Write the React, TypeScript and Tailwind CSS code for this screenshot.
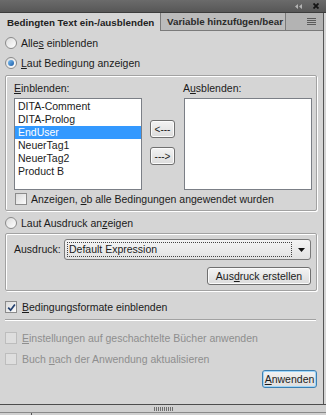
import React from "react";

function U({ children }: { children: React.ReactNode }) {
  return <span className="underline underline-offset-[1px] decoration-1">{children}</span>;
}

function Radio({ checked }: { checked?: boolean }) {
  return (
    <span className="flex h-[12px] w-[12px] shrink-0 items-center justify-center rounded-full border border-[#8b8b8b] bg-gradient-to-br from-[#dcdcdc] to-[#ffffff]">
      {checked && <span className="h-[6px] w-[6px] rounded-full bg-gradient-to-br from-[#7cc0f4] to-[#1a5ca6]" />}
    </span>
  );
}

function Check({ checked, disabled }: { checked?: boolean; disabled?: boolean }) {
  return (
    <span
      className={
        disabled
          ? "flex h-[12px] w-[12px] shrink-0 items-center justify-center border border-[#bdbdbd] bg-[#dedede]"
          : "flex h-[12px] w-[12px] shrink-0 items-center justify-center border border-[#8b8b8b] bg-gradient-to-br from-[#dadada] to-[#fbfbfb]"
      }
    >
      {checked && (
        <svg width="9" height="9" viewBox="0 0 9 9">
          <path d="M1.2 4.6 L3.6 7.2 L7.9 1.4" stroke="#23406f" strokeWidth="1.7" fill="none" />
        </svg>
      )}
    </span>
  );
}

const btn =
  "flex h-[18px] items-center justify-center rounded-[3px] border border-[#707070] bg-gradient-to-b from-[#f3f3f3] to-[#dcdcdc] shadow-[inset_0_0_0_1px_#fbfbfb]";

const group = "rounded-[2px] border border-[#a2a2a2] shadow-[inset_1px_1px_0_#ffffff,1px_1px_0_#ffffff]";

const items = ["DITA-Comment", "DITA-Prolog", "EndUser", "NeuerTag1", "NeuerTag2", "Product B"];

export default function App() {
  return (
    <div className="flex h-[415px] w-[326px] flex-col overflow-hidden whitespace-nowrap bg-[#d5d5d5] font-['Liberation_Sans',Arial,sans-serif] text-[10.5px] leading-[13px] text-[#1b1b1b]">
      {/* title bar */}
      <div className="flex h-[13px] shrink-0 items-center justify-end gap-[11px] border-b border-[#3c3c3c] bg-gradient-to-b from-[#6b6b6b] to-[#575757] pr-[7px]">
        <svg width="7" height="5" viewBox="0 0 7 5">
          <path d="M3 0 L0 2.5 L3 5Z M7 0 L4 2.5 L7 5Z" fill="#b4b4b4" />
        </svg>
        <svg width="6" height="6" viewBox="0 0 6 6">
          <path d="M0.5 0.5 L5.5 5.5 M5.5 0.5 L0.5 5.5" stroke="#141414" strokeWidth="1.8" />
        </svg>
      </div>

      <div className="flex min-h-0 flex-1">
        {/* panel */}
        <div className="flex w-[324px] flex-col border-r border-[#555555]">
          {/* tabs */}
          <div className="flex h-[18px] shrink-0">
            <div className="flex w-[161px] items-center border-r border-[#7a7a7a] pl-[7px] text-[9.8px] font-bold text-[#222222]">
              Bedingten Text ein-/ausblenden
            </div>
            <div className="flex w-[125px] items-center overflow-hidden border-b border-r border-[#7a7a7a] bg-[#bbbbbb] pl-[6px] text-[9.8px] font-bold text-[#2a2a2a]">
              Variable hinzufügen/bear
            </div>
            <div className="flex flex-1 items-center justify-end border-b border-[#7a7a7a] bg-[#b3b3b3] pr-[7px]">
              <svg width="9" height="7" viewBox="0 0 9 7">
                <path d="M0 0.5 H9 M0 2.5 H9 M0 4.5 H9 M0 6.5 H9" stroke="#5a5a5a" strokeWidth="1" />
              </svg>
            </div>
          </div>

          {/* content */}
          <div className="flex flex-col pl-[5px] pr-[6px]">
            <div className="mt-[6px] flex h-[12px] items-center gap-[4px]">
              <Radio />
              <span>
                Alle<U>s</U> einblenden
              </span>
            </div>
            <div className="mt-[8px] flex h-[12px] items-center gap-[4px]">
              <Radio checked />
              <span>
                <U>L</U>aut Bedingung anzeigen
              </span>
            </div>

            <div className={`${group} mt-[6px] flex h-[136px] w-[312px] flex-col pl-[8px] pt-[6px]`}>
              <div className="flex">
                <div className="flex w-[128px] flex-col">
                  <span className="h-[13px]">
                    <U>E</U>inblenden:
                  </span>
                  <div className="mt-[3px] h-[92px] border border-[#7b7f86] bg-white pt-[1px]">
                    {items.map((t) =>
                      t === "EndUser" ? (
                        <div key={t} className="h-[13px] bg-[#3399ff] pl-[3px] text-white">
                          {t}
                        </div>
                      ) : (
                        <div key={t} className="h-[13px] pl-[3px]">
                          {t}
                        </div>
                      )
                    )}
                  </div>
                </div>
                <div className="ml-[8px] flex w-[25px] flex-col pt-[38px]">
                  <div className={`${btn} text-[10px]`}>&lt;---</div>
                  <div className={`${btn} mt-[9px] text-[10px]`}>---&gt;</div>
                </div>
                <div className="ml-[9px] flex w-[128px] flex-col">
                  <span className="-ml-[1px] h-[13px]">
                    A<U>u</U>sblenden:
                  </span>
                  <div className="mt-[3px] h-[92px] border border-[#7b7f86] bg-white" />
                </div>
              </div>
              <div className="mt-[3px] flex h-[12px] items-center gap-[4px] pl-[1px]">
                <Check />
                <span>
                  Anzeigen, <U>o</U>b alle Bedingungen angewendet wurden
                </span>
              </div>
            </div>

            <div className="mt-[6px] flex h-[12px] items-center gap-[4px]">
              <Radio />
              <span>
                Laut Ausdruck an<U>z</U>eigen
              </span>
            </div>

            <div className={`${group} mt-[4px] flex h-[58px] w-[312px] flex-col pl-[8px] pr-[5px] pt-[5px]`}>
              <div className="flex h-[21px] items-center">
                <span className="w-[50px]">Ausdruck:</span>
                <div className="flex h-[21px] flex-1 items-center rounded-[3px] border border-[#7a7a7a] bg-gradient-to-b from-[#f4f4f4] to-[#e2e2e2] pl-[2px] pr-[5px]">
                  <div className="flex h-[15px] flex-1 items-center border border-dotted border-[#444444] pl-[1px]">
                    Default Expression
                  </div>
                  <svg className="ml-[6px]" width="7" height="4" viewBox="0 0 7 4">
                    <path d="M0 0 H7 L3.5 4Z" fill="#111111" />
                  </svg>
                </div>
              </div>
              <div className="mt-[7px] flex justify-end">
                <div className={`${btn} w-[104px]`}>
                  Aus<U>d</U>ruck erstellen
                </div>
              </div>
            </div>

            <div className="mt-[10px] flex h-[12px] items-center gap-[5px]">
              <Check checked />
              <span>
                <U>B</U>edingungsformate einblenden
              </span>
            </div>

            <div className="mt-[6px] h-[2px] w-[311px] border-t border-b border-t-[#a2a2a2] border-b-white" />

            <div className="mt-[11px] flex h-[12px] items-center gap-[5px] text-[#8e8e8e]">
              <Check disabled />
              <span>
                <U>E</U>instellungen auf geschachtelte Bücher anwenden
              </span>
            </div>
            <div className="mt-[9px] flex h-[12px] items-center gap-[5px] text-[#8e8e8e]">
              <Check disabled />
              <span>
                Buch <U>n</U>ach der Anwendung aktualisieren
              </span>
            </div>

            <div className="mt-[5px] flex justify-end">
              <div className="flex h-[18px] w-[55px] items-center justify-center rounded-[3px] border border-[#3c7fb1] bg-gradient-to-b from-[#f2f2f2] to-[#dedede] shadow-[inset_0_0_0_1px_#9fd5f8]">
                <U>A</U>nwenden
              </div>
            </div>
          </div>
        </div>
        <div className="flex-1" />
      </div>

      {/* bottom bar */}
      <div className="flex h-[8px] shrink-0 items-center justify-center border-t border-[#4d4d4d] bg-[#d0d0d0]">
        <div className="flex h-[4px] gap-[1px]">
          {Array.from({ length: 10 }).map((_, i) => (
            <span key={i} className="h-[4px] w-[1px] bg-[#6e6e6e]" />
          ))}
        </div>
      </div>
      <div className="h-[3px] shrink-0 border-t border-[#8a8a8a] bg-[#d0d0d0] pl-[31px]">
        <div className="h-full w-[1px] bg-[#555555]" />
      </div>
    </div>
  );
}
